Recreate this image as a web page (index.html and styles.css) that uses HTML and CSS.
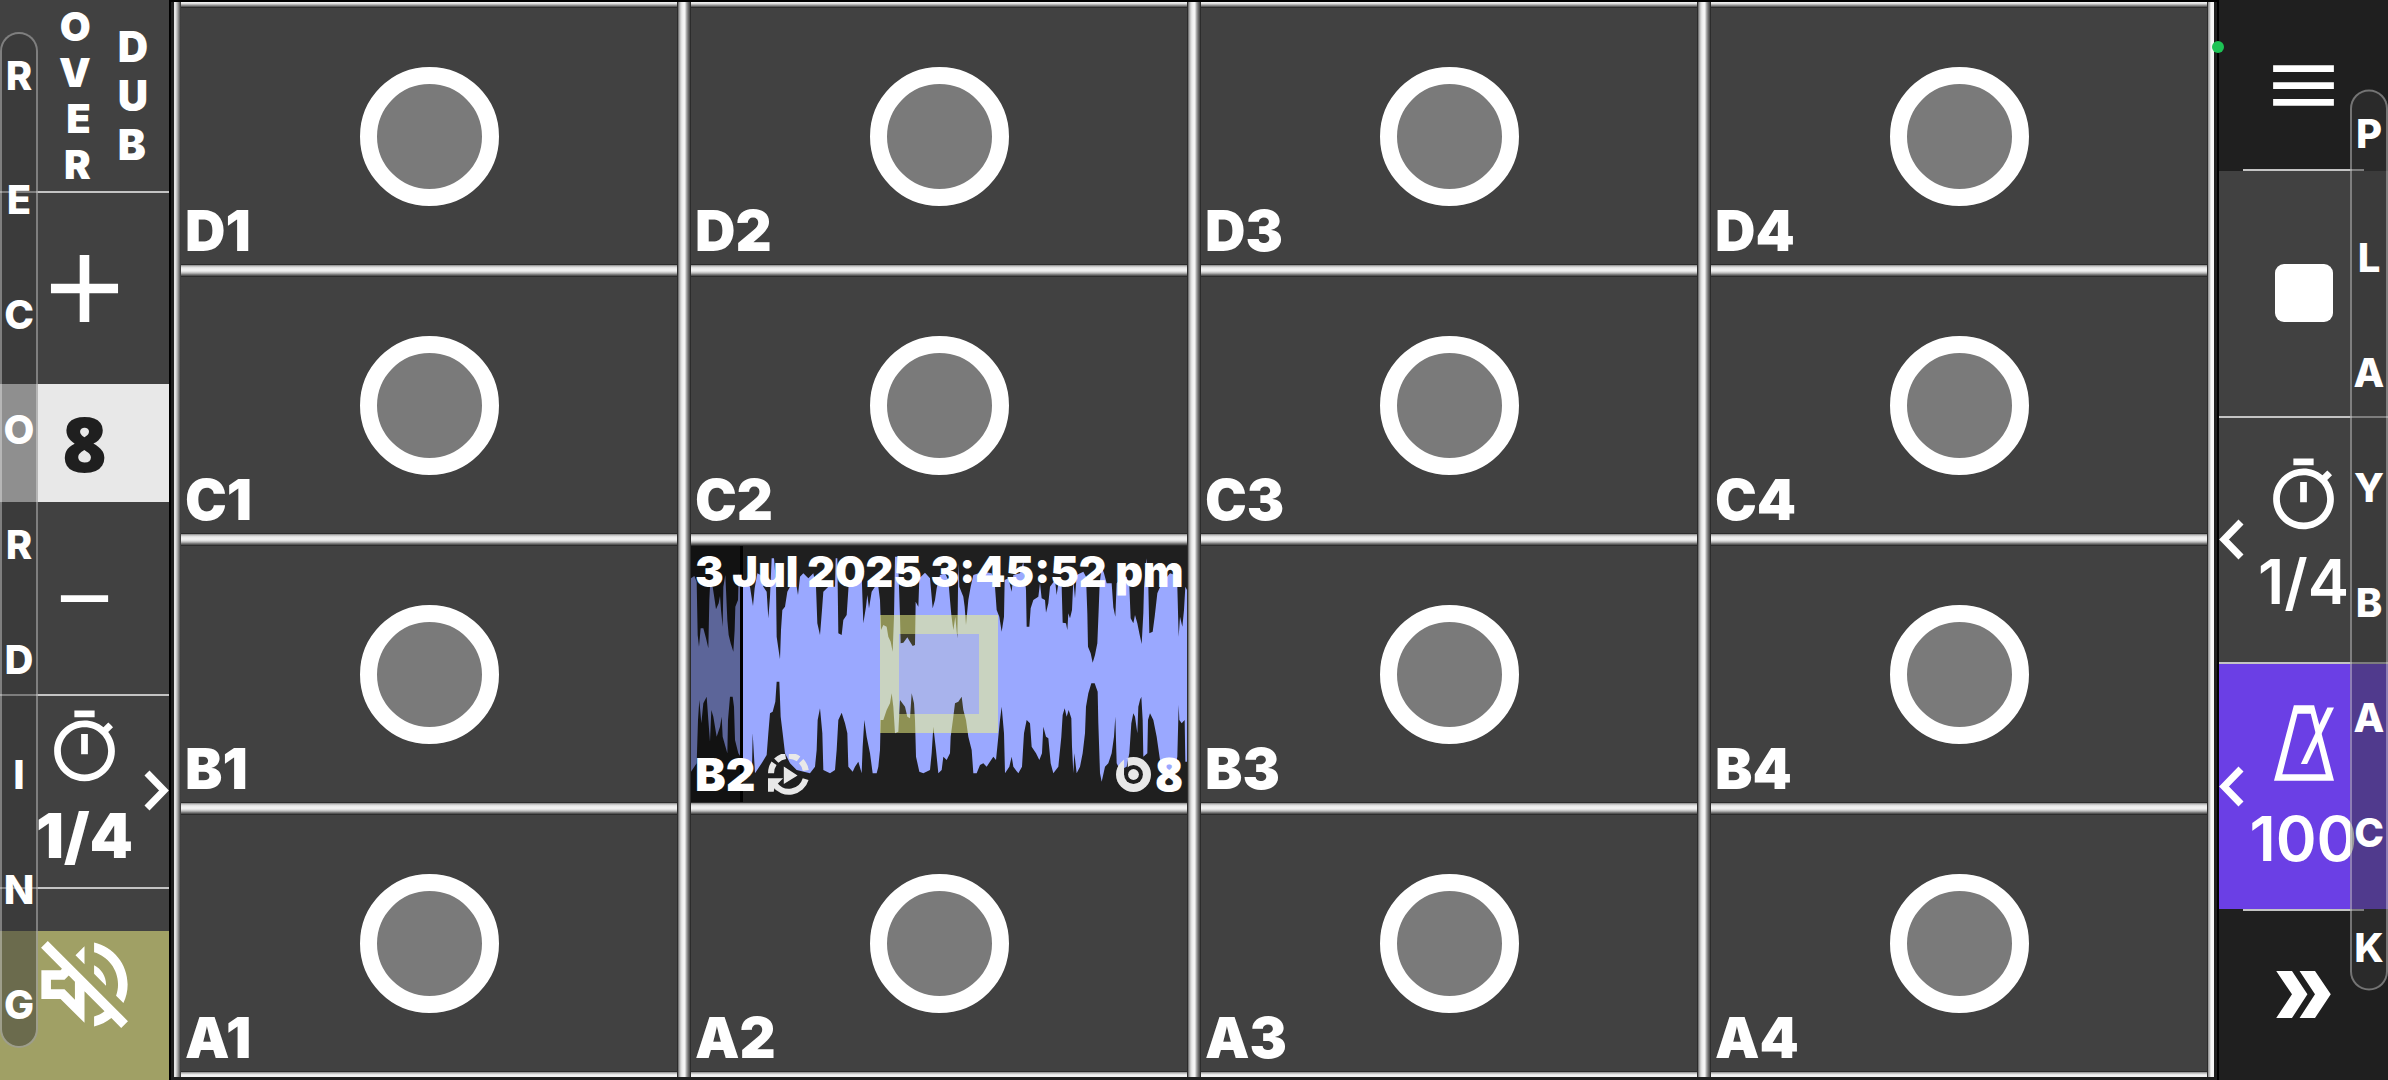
FILE: index.html
```html
<!DOCTYPE html>
<html lang="en">
<head>
<meta charset="utf-8">
<meta name="viewport" content="width=device-width, initial-scale=1">
<title>Loop pads</title>
<link rel="stylesheet" href="styles.css">
</head>
<body>
<div class="app">
  <aside class="side side-left">
    <button class="cell overdub" aria-label="Overdub">
      <span class="stack stack-over"><span>O</span><span>V</span><span>E</span><span>R</span></span>
      <span class="stack stack-dub"><span>D</span><span>U</span><span>B</span></span>
    </button>
    <button class="cell ruled" aria-label="More bars">
      <svg class="icon-lg" viewBox="0 0 24 24"><path d="M19 13h-6v6h-2v-6H5v-2h6V5h2v6h6z"/></svg>
    </button>
    <output class="count">8</output>
    <button class="cell" aria-label="Fewer bars">
      <svg class="icon" viewBox="0 0 24 24"><path d="M5 11h14v2H5z"/></svg>
    </button>
    <button class="cell ruled timer-left" aria-label="Record quantize">
      <svg class="icon" viewBox="0 0 24 24"><path d="M9 1h6v2H9zM11 8h2v6h-2zM19.03 7.39l1.42-1.42c-.43-.51-.9-.99-1.41-1.41l-1.42 1.42C16.07 4.74 14.12 4 12 4c-4.97 0-9 4.03-9 9s4.02 9 9 9 9-4.03 9-9c0-2.12-.74-4.07-1.97-5.61zM12 20c-3.87 0-7-3.13-7-7s3.13-7 7-7 7 3.13 7 7-3.13 7-7 7z"/></svg>
      <span class="value value-bold">1/4</span>
      <svg class="chevron chevron-right" viewBox="0 0 25 41"><path d="M3 3L20 20.500L3 38"/></svg>
    </button>
    <button class="cell ruled monitor" aria-label="Monitor muted">
      <svg class="icon-lg" viewBox="0 0 24 24"><path d="M4.340 2.930 2.930 4.340 7.290 8.700 7 9H3v6h4l5 5v-6.590l4.180 4.180c-.65.49-1.380.88-2.180 1.110v2.060c1.340-.3 2.570-.92 3.610-1.750l2.050 2.050 1.410-1.410L4.340 2.930zM10 15.170 7.830 13H5v-2h2.830l.88-.88L10 11.410v3.760zM19 12c0 .82-.15 1.610-.41 2.340l1.530 1.530c.56-1.170.88-2.480.88-3.870 0-4.280-2.990-7.860-7-8.770v2.060c2.890.86 5 3.540 5 6.710zm-7-8-1.880 1.880L12 7.760zm4.500 8c0-1.770-1.020-3.290-2.500-4.030v1.790l2.480 2.480c.01-.08.02-.16.02-.24z"/></svg>
    </button>
    <button class="handle handle-left" aria-label="Recording">
      <span>R</span><span>E</span><span>C</span><span>O</span><span>R</span><span>D</span><span>I</span><span>N</span><span>G</span>
    </button>
  </aside>

  <main class="board">
    <div class="vbar vbar-first"></div>
    <div class="column">
      <div class="hbar hbar-first"></div>
      <button class="pad"><span class="ring"></span><span class="name">D1</span></button>
      <div class="hbar"></div>
      <button class="pad"><span class="ring"></span><span class="name">C1</span></button>
      <div class="hbar"></div>
      <button class="pad"><span class="ring"></span><span class="name">B1</span></button>
      <div class="hbar"></div>
      <button class="pad"><span class="ring"></span><span class="name">A1</span></button>
      <div class="hbar hbar-last"></div>
    </div>
    <div class="vbar"></div>
    <div class="column">
      <div class="hbar hbar-first"></div>
      <button class="pad"><span class="ring"></span><span class="name">D2</span></button>
      <div class="hbar"></div>
      <button class="pad"><span class="ring"></span><span class="name">C2</span></button>
      <div class="hbar"></div>
      <button class="pad clip">
        <svg class="wave" viewBox="63 78 1488 768" preserveAspectRatio="none" aria-hidden="true">
          <path fill="#9aa8ff" d="M63 175L73 168 80 185 83 345 87 380 92 325 100 325 104 340 108 355 115 385 118 240 120 200 128 200 134 240 138 268 146 250 150 228 153 270 158 320 160 200 166 165 172 300 176 345 182 370 190 395 194 330 196 260 204 240 206 160 212 200 220 200 228 190 240 200 246 240 249 258 254 205 262 160 272 165 280 200 290 215 295 295 300 230 305 115 312 115 318 190 320 350 325 385 330 418 333 330 337 270 345 260 352 215 360 200 380 200 384 225 390 170 400 160 415 175 430 160 438 200 442 310 450 345 456 270 460 215 475 200 495 200 497 115 502 115 505 340 515 345 520 300 530 285 536 195 550 185 575 165 580 310 588 260 592 225 597 265 605 215 615 200 625 200 630 240 633 330 640 315 650 320 655 350 662 365 668 395 672 290 675 110 684 110 690 290 692 370 700 368 712 352 720 365 728 378 735 375 737 245 745 260 748 175 765 158 780 175 788 265 795 240 800 205 810 165 825 160 835 180 840 240 844 285 850 330 856 290 862 355 865 130 868 200 880 230 884 260 888 315 895 240 902 200 910 165 940 155 965 160 975 200 980 270 988 290 995 335 1002 290 1004 180 1015 175 1025 215 1030 165 1050 160 1060 125 1068 210 1070 320 1078 320 1082 265 1090 240 1105 230 1110 190 1115 235 1125 240 1128 278 1135 250 1140 200 1155 180 1160 225 1168 170 1175 200 1178 308 1188 310 1192 330 1195 280 1200 295 1206 270 1210 180 1215 235 1220 165 1240 155 1248 170 1252 280 1254 380 1262 400 1268 428 1275 405 1282 370 1286 270 1289 190 1295 140 1302 160 1310 190 1325 190 1330 262 1336 290 1340 190 1355 170 1370 170 1378 200 1382 295 1390 310 1395 285 1402 310 1408 340 1415 372 1420 280 1422 200 1430 115 1435 200 1438 340 1448 335 1454 290 1462 220 1475 190 1500 160 1515 165 1522 200 1526 350 1530 290 1537 320 1542 270 1546 200 1551 210 1551 725 1546 725 1544 600 1535 610 1528 600 1526 555 1522 710 1515 745 1500 760 1480 755 1470 720 1460 650 1450 600 1440 580 1434 600 1432 700 1420 710 1418 600 1414 530 1410 540 1405 560 1402 640 1395 590 1390 580 1384 610 1378 700 1370 740 1350 750 1340 730 1336 590 1332 650 1325 700 1315 730 1305 740 1295 785 1290 760 1288 700 1285 610 1283 515 1274 490 1264 490 1255 520 1248 560 1245 640 1238 700 1230 740 1220 760 1213 700 1210 760 1206 680 1204 595 1196 570 1190 590 1184 565 1178 585 1174 650 1165 740 1150 760 1142 730 1135 655 1128 650 1120 620 1116 700 1108 720 1098 700 1085 680 1080 610 1070 600 1062 640 1056 740 1045 760 1030 740 1025 710 1018 740 1005 760 1002 640 995 560 990 600 984 660 978 720 970 710 950 740 940 730 930 735 920 760 910 760 905 690 895 650 888 600 880 570 875 530 865 545 855 550 850 590 842 650 840 700 830 720 820 710 815 750 805 760 798 690 790 620 785 700 780 750 760 760 748 755 738 710 735 600 732 550 725 520 720 595 712 590 705 560 690 540 685 635 675 640 670 560 665 520 660 550 650 570 640 600 632 600 630 690 625 740 620 760 608 760 600 700 590 650 583 600 578 680 575 760 565 725 555 740 548 755 535 740 532 640 525 610 515 578 505 600 500 690 495 750 480 760 460 750 457 640 450 565 443 600 440 690 435 740 420 760 380 750 360 730 345 700 338 640 332 590 328 485 320 485 316 545 308 575 300 580 295 640 290 705 275 730 255 760 248 640 246 745 225 750 218 720 205 700 195 660 192 560 188 530 180 530 174 600 172 700 158 650 155 590 150 620 140 650 130 590 124 570 120 665 115 600 110 530 100 550 94 610 88 540 84 600 80 730 63 755z"/>
          <path fill="#000" fill-opacity=".4" d="M63 78h147v768H63z"/>
          <path fill="#000" d="M210 78h9v768h-9z"/>
        </svg>
        <span class="target"></span>
        <span class="clip-info">
          <span class="clip-date">3 Jul 2025 3:45:52 pm</span>
          <span class="clip-foot">
            <span class="clip-name">B2</span>
            <svg class="loop" viewBox="0 0 122 122"><g fill="none" stroke="#e8e8e8" stroke-width="18"><path stroke-dasharray="31 10" d="M9 57A52 52 0 0 1 113 57"/><path d="M112 75A52 52 0 0 1 20 91"/></g><path fill="#e8e8e8" d="M47 37L88 64 47 89zM0 72H45L31 86 20 96 17 112H0z"/></svg>
            <svg class="disc" viewBox="0 0 104 104"><mask id="groove"><path fill="#fff" d="M0 0h104v104H0z"/><path fill="#000" d="M24 4h11v48H24z"/><circle cx="52" cy="52" r="28" fill="#000"/></mask><circle cx="52" cy="52" r="52" fill="#e8e8e8" mask="url(#groove)"/><circle cx="52" cy="52" r="16" fill="#e8e8e8"/></svg>
            <span class="clip-bars">8</span>
          </span>
        </span>
      </button>
      <div class="hbar"></div>
      <button class="pad"><span class="ring"></span><span class="name">A2</span></button>
      <div class="hbar hbar-last"></div>
    </div>
    <div class="vbar"></div>
    <div class="column">
      <div class="hbar hbar-first"></div>
      <button class="pad"><span class="ring"></span><span class="name">D3</span></button>
      <div class="hbar"></div>
      <button class="pad"><span class="ring"></span><span class="name">C3</span></button>
      <div class="hbar"></div>
      <button class="pad"><span class="ring"></span><span class="name">B3</span></button>
      <div class="hbar"></div>
      <button class="pad"><span class="ring"></span><span class="name">A3</span></button>
      <div class="hbar hbar-last"></div>
    </div>
    <div class="vbar"></div>
    <div class="column">
      <div class="hbar hbar-first"></div>
      <button class="pad"><span class="ring"></span><span class="name">D4</span></button>
      <div class="hbar"></div>
      <button class="pad"><span class="ring"></span><span class="name">C4</span></button>
      <div class="hbar"></div>
      <button class="pad"><span class="ring"></span><span class="name">B4</span></button>
      <div class="hbar"></div>
      <button class="pad"><span class="ring"></span><span class="name">A4</span></button>
      <div class="hbar hbar-last"></div>
    </div>
    <div class="vbar vbar-last"></div>
    <span class="live-dot"></span>
  </main>

  <aside class="side side-right">
    <button class="cell dark short-rule" aria-label="Menu">
      <svg class="icon" viewBox="0 0 24 24"><path d="M3 18h18v-2H3zm0-5h18v-2H3zm0-7v2h18V6z"/></svg>
    </button>
    <button class="cell tall" aria-label="Stop"><span class="stop"></span></button>
    <button class="cell tall ruled" aria-label="Playback quantize">
      <svg class="icon timer-right" viewBox="0 0 24 24"><path d="M9 1h6v2H9zM11 8h2v6h-2zM19.03 7.39l1.42-1.42c-.43-.51-.9-.99-1.41-1.41l-1.42 1.42C16.07 4.74 14.12 4 12 4c-4.97 0-9 4.03-9 9s4.02 9 9 9 9-4.03 9-9c0-2.12-.74-4.07-1.97-5.61zM12 20c-3.87 0-7-3.13-7-7s3.13-7 7-7 7 3.13 7 7-3.13 7-7 7z"/></svg>
      <span class="value">1/4</span>
      <svg class="chevron chevron-left" viewBox="0 0 25 41"><path d="M22 3L5 20.500L22 38"/></svg>
    </button>
    <button class="cell tall ruled tempo" aria-label="Metronome">
      <svg class="metronome" viewBox="0 0 181 228"><path fill-rule="evenodd" d="M60 0H121L181 228H0zM71 26L25 208H156L111 26z"/><path d="M161 7H181L100 177H81z"/></svg>
      <span class="value">100</span>
      <svg class="chevron chevron-left" viewBox="0 0 25 41"><path d="M22 3L5 20.500L22 38"/></svg>
    </button>
    <button class="cell dark short-rule-top" aria-label="Next page">
      <svg class="skip" viewBox="0 0 166 143"><path d="M0 0H48L95 71 48 143H0L48 71zM71 0H118L166 71 118 143H71L118 71z"/></svg>
    </button>
    <button class="handle handle-right" aria-label="Playback">
      <span>P</span><span>L</span><span>A</span><span>Y</span><span>B</span><span>A</span><span>C</span><span>K</span>
    </button>
  </aside>
</div>
</body>
</html>
```
FILE: styles.css
```css
* { box-sizing: border-box; }

body {
  margin: 0;
  background: #1f1f1f;
  color: #fff;
  font-family: Inter, "Liberation Sans", sans-serif;
  font-weight: 900;
}

button {
  margin: 0;
  padding: 0;
  border: 0;
  border-radius: 0;
  background: none;
  color: inherit;
  font: inherit;
  cursor: pointer;
}

svg { display: block; flex: none; fill: currentColor; }

.app { display: flex; min-height: 100vh; }

/* Side panels */
.side {
  position: relative;
  display: flex;
  flex-direction: column;
  flex: none;
  width: 169px;
  background: #414141;
}

.cell {
  position: relative;
  display: flex;
  flex-direction: column;
  align-items: center;
  justify-content: center;
  flex: 191 1 0;
  width: 100%;
}

.ruled { border-top: 2px solid #c4c4c4; }
.icon { width: 81px; height: 81px; }
.icon-lg { width: 115px; height: 115px; }

.overdub {
  flex-direction: row;
  justify-content: flex-start;
  gap: 27px;
  padding-left: 59px;
}
.stack { display: flex; flex-direction: column; }
.stack-over { align-items: flex-end; font-size: 40px; line-height: 46px; }
.stack-dub { align-items: flex-start; font-size: 42px; line-height: 49px; }

.count {
  flex: none;
  background: #e8e8e8;
  color: #1f1f1f;
  font-family: "Open Sans", sans-serif;
  font-size: 76px;
  font-weight: 800;
  line-height: 118px;
  text-align: center;
}

.value {
  font-size: 62px;
  font-weight: 600;
  line-height: 88px;
}
.value-bold { font-weight: 900; }
.timer-left .icon { margin: 4px 0; }
.timer-right { margin: 2px 0; }

.chevron {
  position: absolute;
  top: 50%;
  width: 25px;
  height: 41px;
  margin-top: -21px;
  fill: none;
  stroke: #fff;
  stroke-width: 7px;
}
.chevron-right { right: 0; }
.chevron-left { left: 0; }

.monitor {
  background: linear-gradient(#414141 42px, #a0a065 42px);
}

.side-right .cell { flex: 171 1 0; }
.side-right .tall { flex-grow: 245; }
.dark { background: #1f1f1f; }
.short-rule::after,
.short-rule-top::after {
  content: "";
  position: absolute;
  left: 24px;
  width: 121px;
  height: 2px;
  background: #c4c4c4;
}
.short-rule::after { bottom: 0; }
.short-rule-top::after { top: 0; }
.stop { width: 58px; height: 58px; border-radius: 9px; background: #fff; }
.tempo { background: #6b3fe5; }
.metronome { width: 60px; height: 76px; margin: 14px 0; }
.skip { width: 55px; height: 47px; }

/* Drawer handles lying over the outer edges */
.handle {
  position: absolute;
  top: 50%;
  transform: translateY(-50%);
  display: flex;
  flex-direction: column;
  align-items: center;
  gap: 67px;
  width: 38px;
  padding: 18px 0 17px;
  border: 2px solid rgba(255, 255, 255, .35);
  border-radius: 19px;
  background: rgba(54, 54, 54, .5);
  font-size: 40px;
  font-weight: 800;
  line-height: 48px;
}
.handle span:first-child { margin-bottom: 9px; }
.handle-left { left: 0; }
.handle-right { right: 0; }

/* Pad board */
.board {
  position: relative;
  display: flex;
  flex: 1;
  min-width: 0;
  padding: 0 3px 3px;
  border: solid #000;
  border-width: 2px 2px 0;
  background: #1f1f1f;
}

.column { display: flex; flex: 1 1 0; flex-direction: column; min-width: 0; }

.vbar {
  flex: none;
  width: 14px;
  background: linear-gradient(90deg, #2c2c2c 1px, #555 1px, #999 2px, #dcdcdc 4px, #f5f5f5 6px, #f5f5f5 8px, #bbb 9px, #777 11px, #444 13px, #2c2c2c 13px);
}
.vbar-first, .vbar-last { width: 7px; }
.vbar-first { background: linear-gradient(90deg, #d8d8d8, #f0f0f0 1px, #bbb 3px, #777 5px, #2c2c2c 7px); }
.vbar-last { background: linear-gradient(90deg, #2c2c2c 1px, #888 1px, #ccc 3px, #f5f5f5 4px); }

.hbar {
  flex: none;
  height: 13px;
  background: linear-gradient(#2c2c2c 1px, #888 1px, #ddd 3px, #f2f2f2 5px, #eee 7px, #bbb 9px, #666 11px, #444 12px, #2c2c2c 12px);
}
.hbar-first, .hbar-last { height: 6px; }
.hbar-first { background: linear-gradient(#eee 1px, #ccc 2px, #777 4px, #444 5px, #2c2c2c 5px); }
.hbar-last { background: linear-gradient(#2c2c2c 1px, #888 1px, #ddd 3px, #f2f2f2 4px); }

.pad {
  position: relative;
  display: flex;
  align-items: center;
  justify-content: center;
  flex: 1 1 0;
  min-height: 160px;
  background: #414141;
}

.ring {
  width: 139px;
  height: 139px;
  border: 17px solid #fff;
  border-radius: 50%;
  background: #7a7a7a;
}

.name {
  position: absolute;
  left: 4px;
  bottom: 0;
  font-size: 56px;
  line-height: 65px;
}

/* Pad holding a recorded clip */
.clip { background: #1f1f1f; align-items: stretch; }
.wave { position: absolute; inset: 0; width: 100%; height: 100%; }
.target {
  position: absolute;
  top: 50%;
  left: 50%;
  width: 118px;
  height: 118px;
  margin: -59px 0 0 -59px;
  border: 19px solid rgba(245, 252, 135, .52);
  background: rgba(250, 242, 130, .15);
  background-clip: padding-box;
}
.clip-info {
  position: relative;
  display: flex;
  flex: 1;
  flex-direction: column;
  justify-content: space-between;
  min-width: 0;
  padding: 0 4px;
}
.clip-date { font-size: 43px; line-height: 50px; white-space: nowrap; text-align: center; }
.clip-foot {
  display: flex;
  align-items: center;
  font-size: 46px;
  line-height: 56px;
}
.loop { width: 41px; height: 41px; margin-left: 13px; }
.disc { width: 35px; height: 35px; margin: 0 4px 0 auto; }
.clip-bars { font-family: "Open Sans", sans-serif; font-size: 48px; font-weight: 800; }

.live-dot {
  position: absolute;
  top: 39px;
  right: -7px;
  z-index: 1;
  width: 12px;
  height: 12px;
  border-radius: 50%;
  background: #1dc355;
}
```
